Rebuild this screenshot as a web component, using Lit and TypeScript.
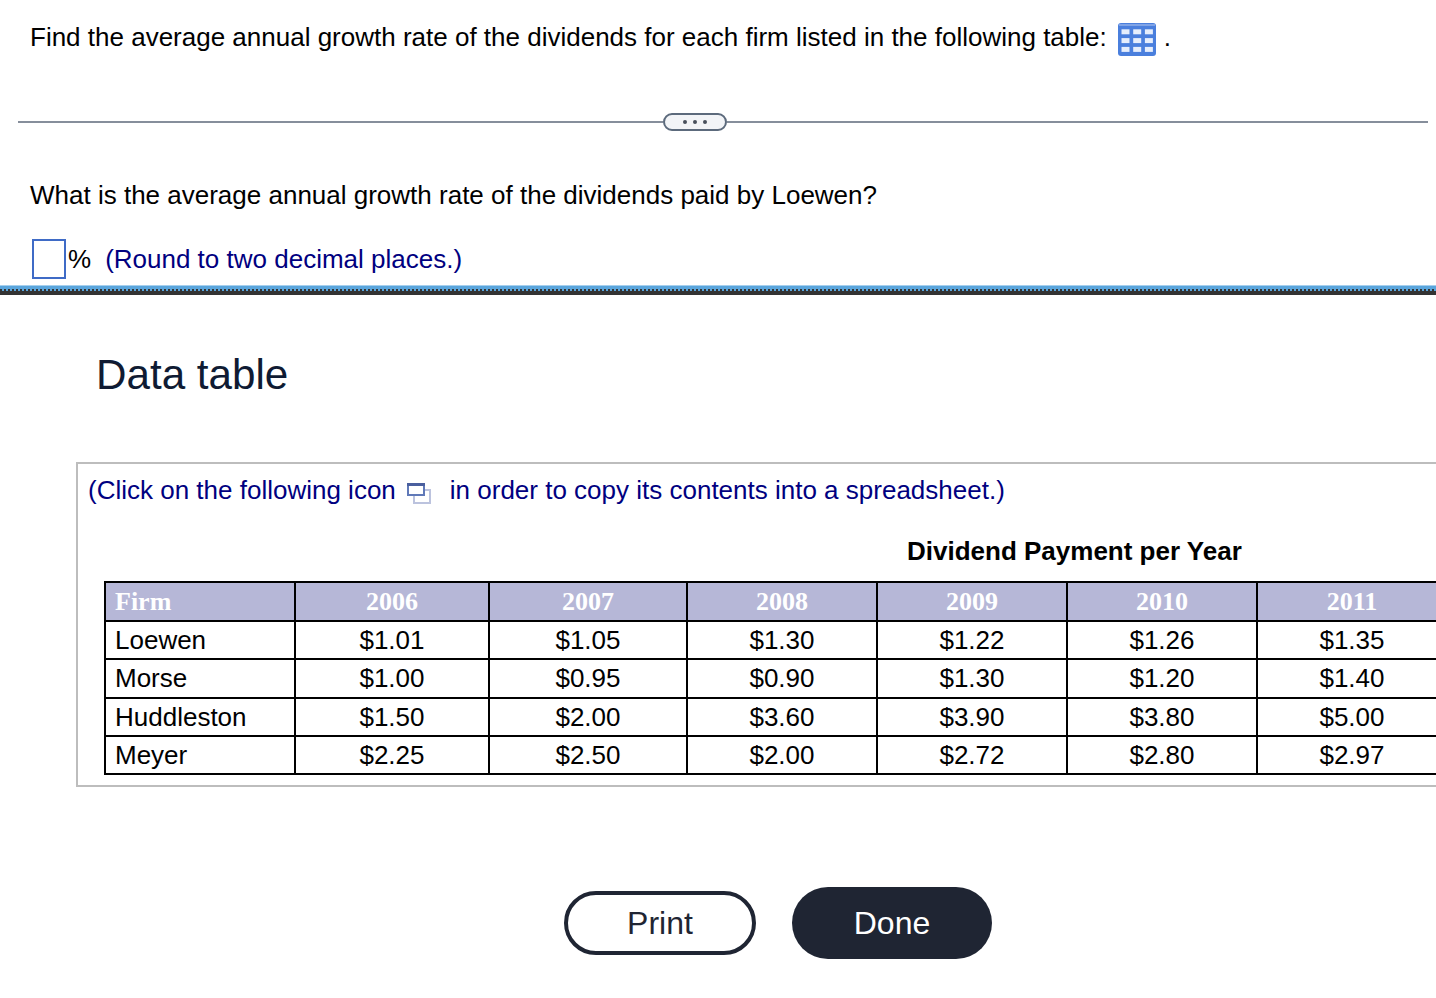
import { LitElement, html, css, svg } from "lit";
import { customElement } from "lit/decorators.js";

const rows: string[][] = [
  ["Loewen", "$1.01", "$1.05", "$1.30", "$1.22", "$1.26", "$1.35"],
  ["Morse", "$1.00", "$0.95", "$0.90", "$1.30", "$1.20", "$1.40"],
  ["Huddleston", "$1.50", "$2.00", "$3.60", "$3.90", "$3.80", "$5.00"],
  ["Meyer", "$2.25", "$2.50", "$2.00", "$2.72", "$2.80", "$2.97"],
];
const years = ["2006", "2007", "2008", "2009", "2010", "2011"];
const widths = [190, 194, 198, 190, 190, 190, 190];

@customElement("app-root")
export class AppRoot extends LitElement {
  static styles = css`
    :host {
      display: block;
      width: 1436px;
      height: 998px;
      overflow: hidden;
      background: #fff;
      font-family: "Liberation Sans", Arial, sans-serif;
      color: #000;
    }
    .question { height: 285px; display: flex; flex-direction: column; }
    .q1 {
      display: flex; align-items: flex-start;
      padding: 22px 0 0 30px; height: 34px;
      font-size: 26px; line-height: 30px; white-space: nowrap;
    }
    .gridicon { margin: 1px 0 0 11px; display: block; }
    .dot { margin-left: 8px; }
    .divider {
      margin: 56px 8px 0 18px; height: 20px;
      display: flex; align-items: center;
    }
    .divider .line { height: 2px; background: #868e9b; }
    .divider .left { width: 645px; }
    .divider .right { flex: 1; }
    .pill {
      width: 60px; height: 14px; border: 2px solid #5c6a7c; border-radius: 9px;
      background: #f2f4f7; display: flex; align-items: center; justify-content: center; gap: 6px;
    }
    .pill span { width: 4px; height: 4px; border-radius: 50%; background: #48505c; }
    .q2 { padding: 48px 0 0 30px; font-size: 26px; line-height: 30px; }
    .answer { display: flex; align-items: center; padding: 29px 0 0 32px; font-size: 26px; line-height: 30px; }
    .box { width: 30px; height: 36px; border: 2px solid #3f6bc6; background: #fff; }
    .pct { margin-left: 2px; }
    .hint { margin-left: 14px; color: #000080; }
    .rule { height: 10px; display: flex; flex-direction: column; }
    .rule .a { height: 1px; background: #a6d0ee; }
    .rule .a2 { height: 3px; background: #5aa5dc; }
    .rule .b { height: 2px; background: repeating-linear-gradient(90deg, #333 0 2px, #5aa5dc 2px 4px); }
    .rule .c { height: 4px; background: #333; }
    h2 {
      margin: 52px 0 0 96px; font-size: 42.2px; line-height: 56px; font-weight: 400; color: #0f1b33;
    }
    .panel {
      margin: 59px 0 0 76px; width: 1400px; height: 321px;
      border: 2px solid #bdbdbd; box-sizing: content-box;
      padding: 0;
    }
    .hintline {
      display: flex; align-items: center; color: #000080;
      font-size: 26px; line-height: 30px; padding: 11px 0 0 10px; white-space: nowrap;
    }
    .copy { margin: 7px 19px 0 11px; display: block; }
    .caption {
      margin: 31px 0 0 829px; font-size: 26px; line-height: 30px; font-weight: 700; white-space: nowrap;
    }
    table {
      margin: 15px 0 0 26px; border-collapse: collapse; table-layout: fixed; width: 1342px;
    }
    th, td { border: 2px solid #000; padding: 0; text-align: center; box-sizing: border-box; }
    th {
      height: 39px;
      background: #b6b7d7; color: #fff; font: 700 26px/30px "Liberation Serif", "Times New Roman", serif;
    }
    td { height: 38.25px; font-size: 26px; line-height: 30px; }
    th:first-child, td:first-child { text-align: left; padding-left: 9px; }
    .buttons { display: flex; align-items: center; gap: 36px; margin: 100px 0 0 564px; }
    button {
      font-family: inherit; font-size: 32px; line-height: 36px; border-radius: 36px; padding: 0; cursor: pointer;
    }
    .print { width: 192px; height: 64px; border: 4px solid #1f2533; background: #fff; color: #1f2533; }
    .done { width: 200px; height: 72px; border: none; background: #1f2533; color: #fff; }
  `;

  private gridIcon() {
    const cells = [];
    for (let r = 0; r < 3; r++) {
      for (let c = 0; c < 3; c++) {
        cells.push(svg`<rect x=${3.5 + c * 11.7} y=${6.3 + r * 8.8} width="8" height="5" fill="#e6eefc"/>`);
      }
    }
    return html`<svg class="gridicon" width="38" height="33" viewBox="0 0 38 33">
      <rect width="38" height="33" rx="3" fill="#4a7fdd"/>
      <rect x="1" y="1" width="36" height="2" fill="#7fa3e6"/>
      ${cells}
    </svg>`;
  }

  private copyIcon() {
    return html`<svg class="copy" width="24" height="21" viewBox="0 0 24 21">
      <rect x="7" y="7" width="16" height="13" fill="#fff" stroke="#bcc3de" stroke-width="2"/>
      <rect x="1" y="1" width="16" height="11" fill="#fff" stroke="#6079b8" stroke-width="2"/>
      <rect x="0" y="0" width="18" height="3" fill="#4a5f9e"/>
    </svg>`;
  }

  render() {
    return html`
      <section class="question">
        <div class="q1">
          <span>Find the average annual growth rate of the dividends for each firm listed in the following table:</span>
          ${this.gridIcon()}<span class="dot">.</span>
        </div>
        <div class="divider">
          <div class="line left"></div>
          <div class="pill"><span></span><span></span><span></span></div>
          <div class="line right"></div>
        </div>
        <div class="q2">What is the average annual growth rate of the dividends paid by Loewen?</div>
        <div class="answer">
          <div class="box"></div><span class="pct">%</span>
          <span class="hint">(Round to two decimal places.)</span>
        </div>
      </section>
      <div class="rule"><div class="a"></div><div class="a2"></div><div class="b"></div><div class="c"></div></div>
      <h2>Data table</h2>
      <div class="panel">
        <div class="hintline">
          <span>(Click on the following icon</span>${this.copyIcon()}<span>in order to copy its contents into a spreadsheet.)</span>
        </div>
        <div class="caption">Dividend Payment per Year</div>
        <table>
          <colgroup>${widths.map((w) => html`<col style="width:${w}px" />`)}</colgroup>
          <thead><tr><th>Firm</th>${years.map((y) => html`<th>${y}</th>`)}</tr></thead>
          <tbody>
            ${rows.map((r) => html`<tr>${r.map((c) => html`<td>${c}</td>`)}</tr>`)}
          </tbody>
        </table>
      </div>
      <div class="buttons">
        <button class="print">Print</button>
        <button class="done">Done</button>
      </div>
    `;
  }
}
